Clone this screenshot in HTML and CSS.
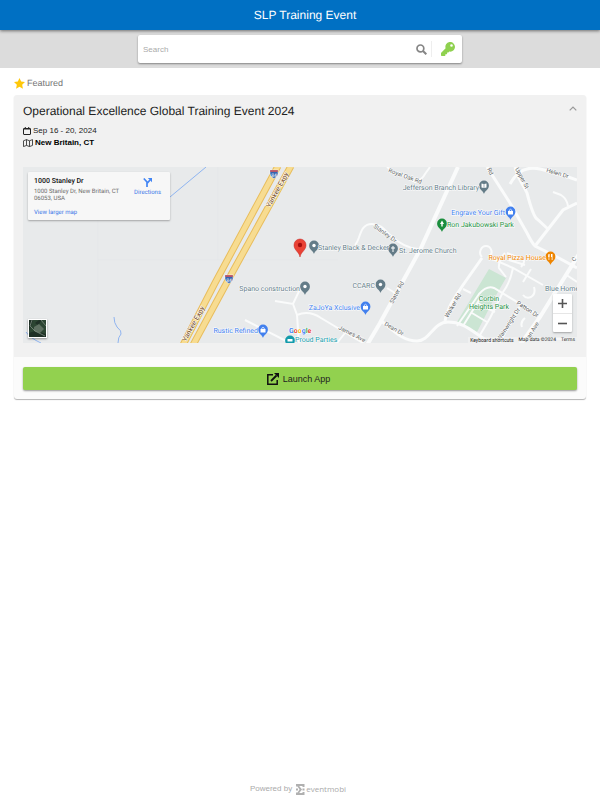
FILE: index.html
```
<!DOCTYPE html>
<html lang="en">
<head>
  <meta charset="UTF-8" />
  <meta name="viewport" content="width=device-width, initial-scale=1.0" />
  <title>SLP Training Event</title>
  <link rel="stylesheet" href="styles.css">
</head>
<body>
  <header class="topbar">
    <h1>SLP Training Event</h1>
  </header>

  <div class="search-bar">
    <form class="search-box" role="search">
      <input type="search" placeholder="Search" aria-label="Search" />
      <button type="submit" class="icon-btn" aria-label="Search">
        <svg width="11" height="11" viewBox="0 0 11 11"><circle cx="4.4" cy="4.4" r="3.4" fill="none" stroke="#858585" stroke-width="1.7"/><path d="M7 7l3.3 3.3" stroke="#858585" stroke-width="2"/></svg>
      </button>
      <button type="button" class="icon-btn key-btn" aria-label="Access code">
        <svg width="14" height="14" viewBox="0 0 512 512"><path fill="#8fd14f" d="M512 176c0 97-79 176-176 176-11 0-22-1-33-3l-24 27a24 24 0 0 1-18 8h-37v40a24 24 0 0 1-24 24h-40v40a24 24 0 0 1-24 24H24a24 24 0 0 1-24-24v-78c0-6 3-13 7-17l162-162a176 176 0 1 1 343-55zM336 128a48 48 0 1 0 96 0 48 48 0 1 0-96 0z"/></svg>
      </button>
    </form>
  </div>

  <main class="content">
    <h2 class="section-title">
      <svg width="11" height="11" viewBox="0 0 24 24"><path fill="#ffc80a" d="M12 0l3.6 7.9 8.4 1-6.200 5.900 1.700 8.500L12 19.100 4.500 23.300l1.700-8.500L0 8.900l8.400-1z"/></svg>
      Featured
    </h2>

    <article class="card">
      <div class="card-body">
        <div class="card-head">
          <h3>Operational Excellence Global Training Event 2024</h3>
          <button type="button" class="icon-btn" aria-label="Collapse">
            <svg width="8" height="7" viewBox="0 0 8 7"><path d="M.7 5.300L4 2l3.300 3.300" fill="none" stroke="#999" stroke-width="1.200"/></svg>
          </button>
        </div>
        <p class="meta">
          <svg width="8" height="8" viewBox="0 0 8 8" fill="none" stroke="#222"><rect x=".5" y="1.500" width="7" height="6" rx=".5"/><path d="M.5 2h7M2.300 0v2M5.700 0v2"/></svg>
          Sep 16 - 20, 2024
        </p>
        <p class="meta place">
          <svg width="10" height="8" viewBox="0 0 10 8" fill="none" stroke="#222" stroke-width=".8"><path d="M.5 1.800L3.500.6l3 1.200 3-1.200v5.800l-3 1.200-3-1.200-3 1.200zM3.500.6v5.800M6.500 1.800v5.800"/></svg>
          New Britain, CT
        </p>

        <div class="map">
          <svg class="map-canvas" viewBox="23 167 554 176" preserveAspectRatio="xMidYMid slice" role="img" aria-label="Map of 1000 Stanley Dr">
            <defs>
              <path id="pin" d="M0 7C-.6 4-4.900 2.600-4.900-1.500a4.900 4.900 0 0 1 9.800 0C4.900 2.600.6 4 0 7z"/>
              <g id="shield">
                <path d="M-4-4h8v3.500C4 2 1.800 3.500 0 4.500-1.800 3.500-4 2-4-.5z" fill="#3565b0" stroke="#fff" stroke-width=".5"/>
                <path d="M-3.800-3.800h7.600v1.600h-7.600z" fill="#d5545a"/>
                <text y="2.500" class="shield-text">84</text>
              </g>
            </defs>
            <rect x="23" y="167" width="554" height="176" fill="#e8eaeb"/>
            <path d="M98 220v123M98 260h240M218 167v93" stroke="#e2e5e7" stroke-width=".6"/>

            <!-- park -->
            <path d="M489 269l17 9-11 19-18 35-20-10z" fill="#cbe5d3"/>

            <!-- streams -->
            <g class="stream">
              <path d="M206 167L170 197"/>
              <path d="M114 317q0 6 3 10 5 4 4 7-3 3-3 9"/>
              <path d="M26 332q4 6 15 11"/>
            </g>

            <!-- streets -->
            <g class="road">
              <path class="wide" d="M458 167L420 250 380 323 367 345"/>
              <path class="wide" d="M579 254L540 317 520 345"/>
              <path d="M355 245c6-6 4-21 17-21 8 0 12 5 18 11q14 13 28 14"/>
              <path class="mid" d="M380 320c12 9 22 21 37 21 13 0 16-19 31-19 17 0 24 10 46 23"/>
              <path class="mid" d="M445 321c2-14 11-25 18-36l19-27"/>
              <path d="M482 257c-4-4-1-11 4-11s8 7 3 11M488 257l25 11 30 17"/>
              <path class="mid" d="M487 167l23 36 17 30q5 10 8 13l22 11 20 11"/>
              <path class="mid" d="M515 167c4 15 7 15 12 26q6 23 10 26l11 10"/>
              <path class="mid" d="M535 246l28-36 14-7"/>
              <path d="M553 192l8 3q6 4 7 11"/>
              <path class="mid" d="M510 184c7-13 17-18 30-15l20 5 17 6"/>
              <path d="M387 167q6 5 12 6l16 9q7-2 10-8l5-7"/>
              <path d="M513 268q-3 15-10 24l-13 26-10 17M457 326l22-32q8-9 15-6l46 28"/>
              <path d="M472 313l15 9M463 326l18-29M477 303l18 9"/>
              <path d="M505 253q-7 8-6 15l7 9M507 253l12 5q9 1 2 9M523 282l8-13M523 295q3 4 8 2 5-3 3-10M509 260l16 5M565 274l12 8"/>
              <path d="M463 289l8 4M520 306l-21 38M525 318q-5 4-3 9"/>
              <path d="M275 301l18 3 8-17M293 304l4 11 2 28M297 315q12-5 24 3l42 25M345 333l-8 10M245 320l45 23M387 288l8 5M555 339h18"/>
            </g>

            <!-- Yankee Expressway -->
            <g class="highway-edge">
              <path d="M278 166L215 283 183 345"/><path d="M291 166L232 273 193 345"/>
            </g>
            <g class="highway">
              <path d="M278 166L215 283 183 345"/><path d="M291 166L232 273 193 345"/>
            </g>
            <use href="#shield" x="274" y="174"/>
            <use href="#shield" x="229" y="279"/>

            <g class="street-name">
              <text class="highway-name" transform="translate(270 208) rotate(-61)">Yankee Expy</text>
              <text class="highway-name" transform="translate(186 342) rotate(-61)">Yankee Expy</text>
              <text transform="translate(388 172) rotate(20)">Royal Oak Rd</text>
              <text transform="translate(487 169) rotate(64)">Rd</text>
              <text transform="translate(515 169) rotate(62)">Upper St</text>
              <text transform="translate(546 172) rotate(16)">Helen Dr</text>
              <text transform="translate(373 227) rotate(36)">Stanley Dr</text>
              <text transform="translate(393 304) rotate(-62)">Slater Rd</text>
              <text transform="translate(448 318) rotate(-60)">Walker Rd</text>
              <text transform="translate(384 325) rotate(31)">Dean Dr</text>
              <text transform="translate(338 329) rotate(27)">James Ave</text>
              <text transform="translate(516 304) rotate(33)">Patton Dr</text>
              <text transform="translate(500 341) rotate(-57)">Wainwright Dr</text>
              <text transform="translate(529 340) rotate(-58)">lan Ave</text>
              <text transform="translate(574 262) rotate(-45)">C</text>
            </g>

            <g class="poi">
              <use href="#pin" x="314" y="247"/>
              <use href="#pin" x="393" y="250"/><text x="399" y="253">St. Jerome Church</text>
              <use href="#pin" x="484" y="187"/><text x="479" y="190" class="end">Jefferson Branch Library</text>
              <use href="#pin" x="305" y="288"/><text x="300" y="291" class="end">Spano construction</text>
              <use href="#pin" x="380.500" y="286"/><text x="375" y="288" class="end">CCARC</text>
              <text x="318" y="250">Stanley Black &amp; Decker</text>
              <text x="545" y="291">Blue Home</text>
            </g>
            <g class="poi shop">
              <use href="#pin" x="510.500" y="213"/><text x="505" y="215" class="end">Engrave Your Gift</text>
              <use href="#pin" x="365.500" y="308"/><text x="360" y="310" class="end">ZaJoYa Xclusive</text>
              <use href="#pin" x="263" y="331"/><text x="258" y="333" class="end">Rustic Refined</text>
            </g>
            <g class="poi green">
              <use href="#pin" x="442" y="225"/><text x="447" y="227">Ron Jakubowski Park</text>
              <text x="489" y="301" class="middle">Corbin</text>
              <text x="489" y="309" class="middle">Heights Park</text>
            </g>
            <g class="poi food">
              <use href="#pin" x="550.500" y="258"/><text x="546" y="260" class="end">Royal Pizza House</text>
            </g>
            <g class="poi teal">
              <use href="#pin" x="290" y="342"/><text x="295" y="342">Proud Parties</text>
            </g>

            <!-- glyphs inside the pins -->
            <g fill="#fff">
              <circle cx="314" cy="245.500" r="1.700"/><circle cx="305" cy="286.500" r="1.700"/><circle cx="380.500" cy="284.500" r="1.700"/>
              <path d="M392.500 246h1v1.500h1.500v1h-1.500v3.500h-1v-3.500H391v-1h1.500z"/>
              <path d="M481.500 183.500l2.200.6v4l-2.200-.6zM486.500 183.500l-2.200.6v4l2.200-.6z"/>
              <path d="M508 211h5v3.500h-5zM363 306h5v3.500h-5zM260.500 329h5v3.500h-5z"/>
              <path d="M442 220.500l2 3.500h-1.300v2.500h-1.400V224H440z"/>
              <path d="M548 254h.6v1.500h.5V254h.6v2.500l-.4.400v3h-.7v-3l-.6-.5zM551 254h1.500v6h-.8v-3H551z"/>
              <path d="M287.500 339h5v2.500h-5z"/>
            </g>
            <g fill="none" stroke="#fff" stroke-width=".7">
              <path d="M509.300 211v-1q1.200-1.500 2.400 0v1M364.300 306v-1q1.200-1.500 2.400 0v1M261.800 329v-1q1.200-1.500 2.400 0v1"/>
            </g>

            <!-- selected place -->
            <path d="M300 257c-.7-5-6-6.500-6-12a6 6 0 0 1 12 0c0 5.500-5.300 7-6 12z" fill="#e94235" stroke="#c5221f" stroke-width=".5"/>
            <circle cx="300" cy="245" r="2.200" fill="#a50e0e"/>

            <text x="289" y="333" class="google"><tspan fill="#4285f4">G</tspan><tspan fill="#ea4335">o</tspan><tspan fill="#fbbc05">o</tspan><tspan fill="#4285f4">g</tspan><tspan fill="#34a853">l</tspan><tspan fill="#ea4335">e</tspan></text>
          </svg>

          <div class="place-card">
            <div class="place-info">
              <strong>1000 Stanley Dr</strong>
              <address>1000 Stanley Dr, New Britain, CT 06053, USA</address>
              <a href="#map">View larger map</a>
            </div>
            <a class="directions" href="#directions">
              <svg width="9" height="10" viewBox="0 0 9 10"><path d="M.8 1.500L4 5v5M4 6.500L7 3" fill="none" stroke="#4285f4" stroke-width="1.700"/><path d="M4.800 1H9v4.200z" fill="#4285f4"/></svg>
              Directions
            </a>
          </div>

          <button type="button" class="satellite" aria-label="Show satellite imagery">
            <svg width="17" height="17" viewBox="0 0 17 17"><path d="M0 0h17v17H0z" fill="#2c4532"/><path d="M0 0h4L1 9 0 11zM6 3l4-3h3L9 5zM0 13l6-2 11 3v3H0z" fill="#1f3026"/><path d="M5 7l5-3 5 5-4 4-6-2z" fill="#5e7061"/><path d="M3 0L1 6l5 5 10 5M12 0l5 6" fill="none" stroke="#8a9a8c" stroke-width=".7"/></svg>
          </button>

          <div class="zoom">
            <button type="button" aria-label="Zoom in"><svg width="9" height="9" viewBox="0 0 9 9"><path d="M0 4.500h9M4.500 0v9" stroke="#555" stroke-width="1.600"/></svg></button>
            <button type="button" aria-label="Zoom out"><svg width="9" height="9" viewBox="0 0 9 9"><path d="M0 4.500h9" stroke="#555" stroke-width="1.600"/></svg></button>
          </div>

          <div class="map-legal">
            <button type="button">Keyboard shortcuts</button>
            <span>Map data ©2024</span>
            <a href="#terms">Terms</a>
          </div>
        </div>
      </div>

      <div class="card-actions">
        <button type="button" class="launch">
          <svg width="12" height="12" viewBox="0 0 12 12"><path d="M6 1.800H.8v9.400h9.400V7" fill="none" stroke="#111" stroke-width="1.500"/><path d="M4 8l5.500-5.500" stroke="#111" stroke-width="1.800"/><path d="M7 0h5v5z" fill="#111"/></svg>
          Launch App
        </button>
      </div>
    </article>
  </main>

  <footer class="footer">
    Powered by
    <a href="#eventmobi">
      <svg width="9" height="11" viewBox="0 0 9 11"><path d="M0 0h8.500v3H7L6 2H3.200L6 5.500 3.200 9H6l1-1h1.500v3H0V8.500h1.500L3.500 5.500 1.500 2.500H0z" fill="#b0b0b0"/><path d="M0 4.500h2v2H0zM6.500 4.500h2v2h-2z" fill="#b0b0b0"/></svg>
      <span>eventmobi</span>
    </a>
  </footer>
</body>
</html>
```
FILE: styles.css
```
* {
  box-sizing: border-box;
}

body {
  margin: 0;
  min-height: 100vh;
  display: flex;
  flex-direction: column;
  font-family: "Liberation Sans", Arial, sans-serif;
  background-color: #ffffff;
  color: #222222;
}

h1, h2, h3, p {
  margin: 0;
  font-weight: normal;
}

svg {
  display: block;
  flex: none;
}

button {
  font-family: inherit;
  border: none;
  padding: 0;
  background: none;
  cursor: pointer;
}

a {
  text-decoration: none;
}

.topbar {
  position: relative;
  padding-left: 10px;
  background-color: #0070c3;
  color: #ffffff;
  text-align: center;
  box-shadow: 0 1px 3px rgba(0, 0, 0, 0.5);
}

.topbar h1 {
  font-size: 12px;
  line-height: 30px;
  text-rendering: geometricPrecision;
}

.search-bar {
  background-color: #dcdcdc;
  padding: 5px 14px;
}

.search-box {
  display: flex;
  align-items: center;
  width: 54vw;
  height: 28px;
  margin: 0 auto;
  padding: 0 7px 0 5px;
  background-color: #ffffff;
  border-radius: 2px;
  box-shadow: 0 1px 2px rgba(0, 0, 0, 0.4);
}

.search-box input {
  flex: 1;
  min-width: 0;
  padding: 0;
  border: none;
  outline: none;
  font-family: inherit;
  font-size: 8px;
}

.search-box input::placeholder {
  color: #aaaaaa;
}

.icon-btn {
  display: flex;
  align-items: center;
}

.key-btn {
  margin-left: 4px;
  padding-left: 9px;
  height: 16px;
  border-left: 1px solid #eeeeee;
}

.content {
  flex: 1;
  padding: 10px 14px;
}

.section-title {
  display: flex;
  align-items: center;
  gap: 2px;
  margin-bottom: 6px;
  font-size: 9px;
  line-height: 11px;
  color: #757575;
  text-rendering: geometricPrecision;
}

.card {
  background-color: #fbfbfb;
  border-radius: 3px;
  box-shadow: 0 1px 1px rgba(0, 0, 0, 0.3);
}

.card-body {
  padding: 10px 9px 14px;
  background-color: #f1f1f1;
  border-radius: 3px 3px 0 0;
}

.card-head {
  display: flex;
  justify-content: space-between;
  align-items: flex-start;
  margin-bottom: 7px;
}

.card-head h3 {
  font-size: 12px;
  line-height: 13px;
  text-rendering: geometricPrecision;
}

.meta {
  display: flex;
  align-items: center;
  gap: 2px;
  font-size: 8px;
  line-height: 12px;
}

.place {
  font-weight: bold;
  color: #000000;
}

.map {
  position: relative;
  margin-top: 18px;
  font-family: Roboto, Arial, sans-serif;
  text-rendering: geometricPrecision;
}

.map-canvas {
  width: 100%;
  height: 176px;
}

.road path {
  fill: none;
  stroke: #fafbfb;
  stroke-width: 2;
}

.road .mid {
  stroke-width: 3;
}

.road .wide {
  stroke-width: 4;
}

.stream path {
  fill: none;
  stroke: #8fb4f0;
  stroke-width: 1;
}

.highway-edge path {
  fill: none;
  stroke: #e8bd5c;
  stroke-width: 7;
}

.highway path {
  fill: none;
  stroke: #f7dc91;
  stroke-width: 5;
}

.shield-text {
  font-size: 5px;
  fill: #ffffff;
  text-anchor: middle;
}

.street-name text {
  font-size: 6px;
  fill: #5c5f62;
  stroke: #ffffff;
  stroke-width: 1px;
  paint-order: stroke;
}

.street-name .highway-name {
  font-size: 7px;
  fill: #6b3a0b;
}

.poi {
  fill: #647c88;
  font-size: 7px;
}

.poi text {
  stroke: #ffffff;
  stroke-width: 1px;
  paint-order: stroke;
}

.shop {
  fill: #4280ee;
}

.green {
  fill: #1b8e3d;
}

.food {
  fill: #ee8500;
}

.teal {
  fill: #149bab;
}

.end {
  text-anchor: end;
}

.middle {
  text-anchor: middle;
}

.google {
  font-size: 7px;
  font-weight: bold;
  stroke: #ffffff;
  stroke-width: 1px;
  paint-order: stroke;
}

.place-card {
  position: absolute;
  top: 5px;
  left: 5px;
  display: flex;
  justify-content: space-between;
  width: 142px;
  height: 48px;
  padding: 5px 9px 4px 6px;
  background-color: #f7f7f7;
  border-radius: 1px;
  box-shadow: 0 1px 2px rgba(0, 0, 0, 0.3);
  font-size: 6px;
}

.place-info {
  display: flex;
  flex-direction: column;
  width: 90px;
}

.place-info strong {
  font-size: 7px;
  line-height: 8px;
  font-weight: 500;
  color: #111111;
}

.place-info address {
  margin: 3px 0 7px;
  font-style: normal;
  line-height: 7px;
  color: #6b6b6b;
}

.place-card a {
  line-height: 7px;
  color: #3a76e8;
}

.place-card .directions {
  display: flex;
  flex-direction: column;
  align-items: center;
  gap: 2px;
}

.satellite {
  position: absolute;
  bottom: 5px;
  left: 5px;
  border: 1px solid #ffffff;
  box-shadow: 0 1px 2px rgba(0, 0, 0, 0.4);
}

.zoom {
  position: absolute;
  right: 5px;
  bottom: 11px;
  background-color: #ffffff;
  border-radius: 1px;
  box-shadow: 0 1px 2px rgba(0, 0, 0, 0.3);
}

.zoom button {
  display: flex;
  align-items: center;
  justify-content: center;
  width: 19px;
  height: 19px;
}

.zoom button + button {
  border-top: 1px solid #e6e6e6;
}

.map-legal {
  position: absolute;
  right: 0;
  bottom: 0;
  display: flex;
  gap: 5px;
  padding: 0 2px;
  background-color: rgba(245, 245, 245, 0.5);
  font-size: 5px;
  line-height: 6px;
}

.map-legal button, .map-legal a {
  font-size: 5px;
  line-height: 6px;
  color: #222222;
}

.card-actions {
  padding: 10px 9px 9px;
}

.launch {
  display: flex;
  align-items: center;
  justify-content: center;
  gap: 4px;
  width: 100%;
  height: 23px;
  padding-right: 3px;
  background-color: #92d14f;
  border-radius: 2px;
  box-shadow: 0 1px 2px rgba(0, 0, 0, 0.4);
  font-size: 9px;
  color: #222222;
}

.footer {
  display: flex;
  align-items: center;
  justify-content: center;
  gap: 4px;
  padding: 0 4px 5px 0;
  font-size: 8px;
  line-height: 12px;
  color: #aaaaaa;
}

.footer a {
  display: flex;
  align-items: center;
  gap: 1px;
  font-family: "Open Sans", sans-serif;
  color: #aaaaaa;
}
```
